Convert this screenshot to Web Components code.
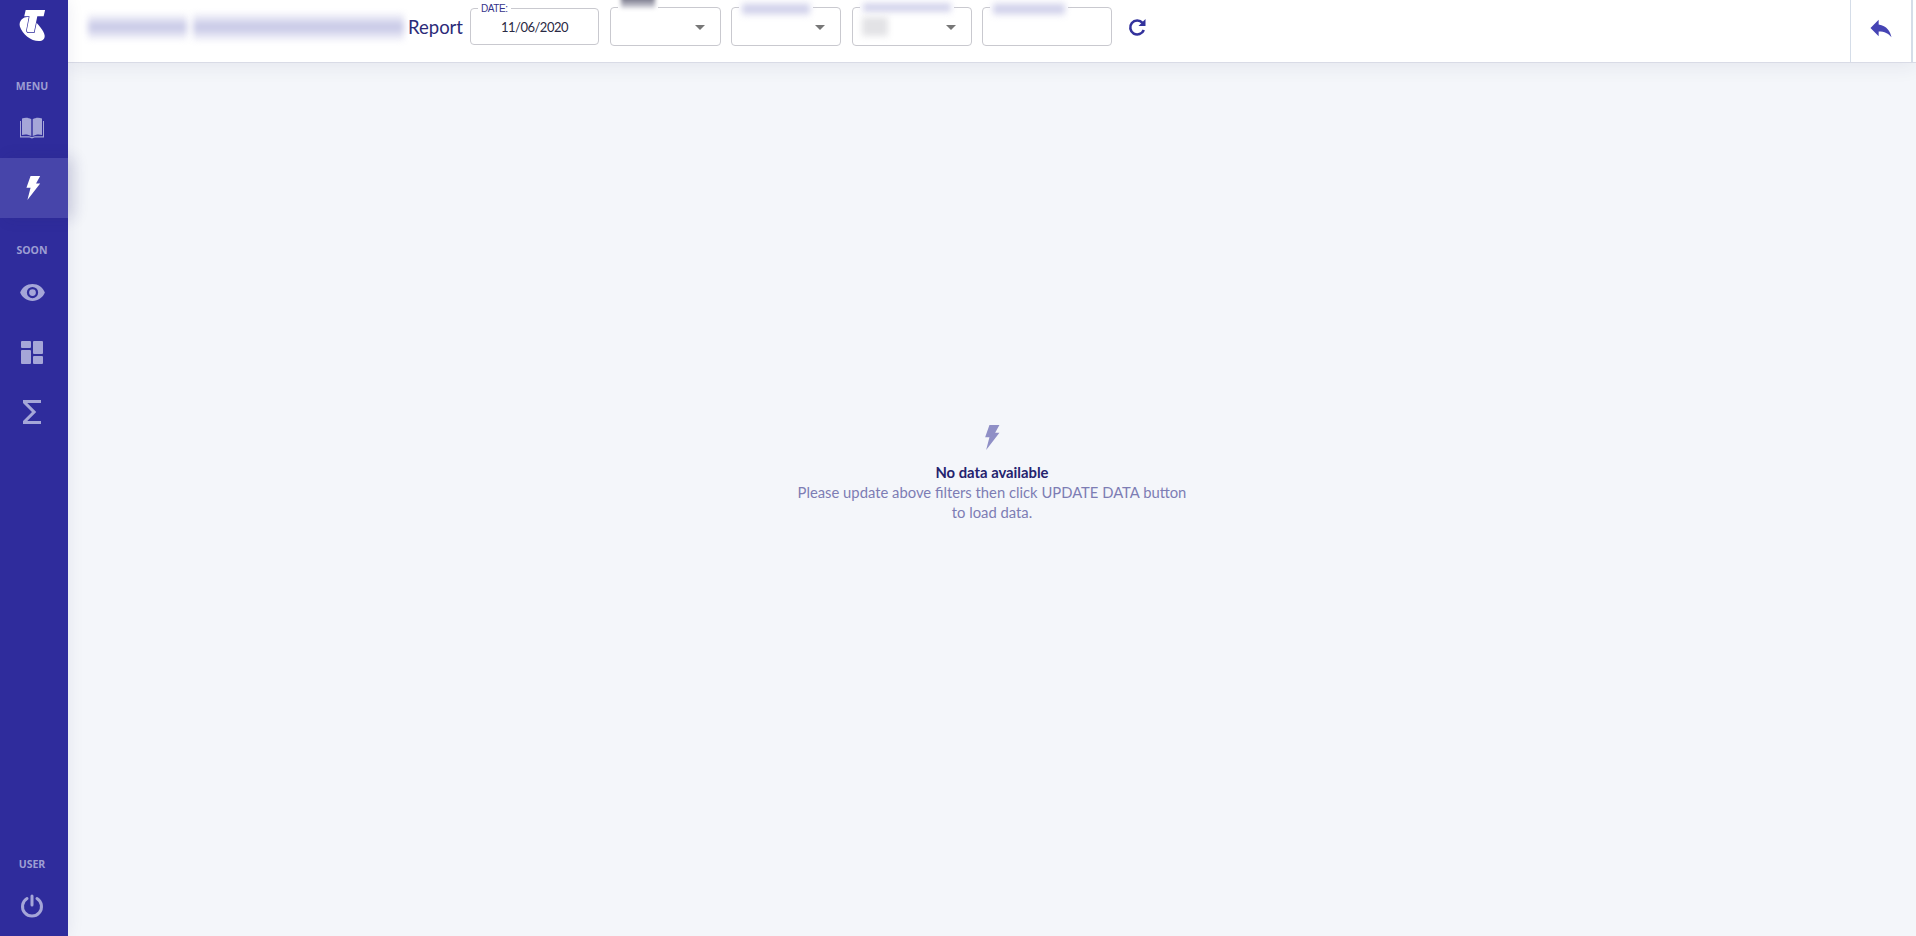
<!DOCTYPE html>
<html>
<head>
<meta charset="utf-8">
<title>Report</title>
<style>
  html, body { margin: 0; height: 100%; }
  body { font-family: Lato, "Noto Sans", sans-serif; background: #f4f6fa; overflow: hidden; }
</style>
</head>
<body>
<app-shell>
  <side-nav slot="nav">
    <nav-logo></nav-logo>
    <nav-heading>MENU</nav-heading>
    <nav-item>
      <svg width="26" height="22" viewBox="0 0 26 22" fill="currentColor"><path d="M3 1.500C6 .2 9.500 .4 12.300 2.200V19C9.500 17.400 6 17 3 18Z"/><path d="M23 1.500C20 .2 16.500 .4 13.700 2.200V19C16.500 17.400 20 17 23 18Z"/><path d="M1 4V20.500H10.500L13 21.500L15.500 20.500H25V4H24V19.200H16L13 20 10 19.200H2V4Z"/></svg>
    </nav-item>
    <nav-item active>
      <svg width="15" height="24" viewBox="0 0 14.700 25" fill="currentColor"><polygon points="4.300,0 14.300,0 10,7.700 14.300,7.700 1,25 4.300,12.300 0,12.300"/></svg>
    </nav-item>
    <nav-heading>SOON</nav-heading>
    <nav-item>
      <svg width="27" height="27" viewBox="0 0 24 24" fill="currentColor"><path d="M12,9A3,3 0 0,0 9,12A3,3 0 0,0 12,15A3,3 0 0,0 15,12A3,3 0 0,0 12,9M12,17A5,5 0 0,1 7,12A5,5 0 0,1 12,7A5,5 0 0,1 17,12A5,5 0 0,1 12,17M12,4.500C7,4.500 2.730,7.610 1,12C2.730,16.390 7,19.500 12,19.500C17,19.500 21.270,16.390 23,12C21.270,7.610 17,4.500 12,4.500Z"/></svg>
    </nav-item>
    <nav-item>
      <svg width="22" height="23" viewBox="0 0 22 23" fill="currentColor"><rect x="0" y="0" width="10" height="7" rx="1"/><rect x="12" y="0" width="10" height="13" rx="1"/><rect x="0" y="9" width="10" height="14" rx="1"/><rect x="12" y="15" width="10" height="8" rx="1"/></svg>
    </nav-item>
    <nav-item>
      <svg width="36" height="36" viewBox="0 0 24 24" fill="currentColor"><path d="M18,6H8.830L14.830,12L8.830,18H18V20H6V18L12,12L6,6V4H18V6Z"/></svg>
    </nav-item>
    <nav-spacer></nav-spacer>
    <nav-heading>USER</nav-heading>
    <nav-item>
      <svg width="24" height="24" viewBox="0 0 24 24" fill="none" stroke="currentColor" stroke-width="3" stroke-linecap="round"><path d="M7 4.500A9.500 9.500 0 1 0 17 4.500"/><path d="M12 2V11"/></svg>
    </nav-item>
  </side-nav>

  <top-bar slot="top">
    <blur-block style="width:99px;height:24px;margin-right:6px"></blur-block>
    <blur-block style="width:211px;height:26px;margin-right:4px"></blur-block>
    <page-title>Report</page-title>
    <filter-field label="DATE:" value="11/06/2020" style="width:129px;height:37px;margin:0 11px 0 7px"></filter-field>
    <filter-field select style="width:111px;margin-right:10px">
      <blur-block slot="legend" dark style="width:34px;height:13px;margin-top:-7px"></blur-block>
    </filter-field>
    <filter-field select style="width:110px;margin-right:11px">
      <blur-block slot="legend" style="width:68px;height:14px"></blur-block>
    </filter-field>
    <filter-field select style="width:120px;margin-right:10px">
      <blur-block slot="legend" style="width:88px;height:11px"></blur-block>
      <blur-block slot="content" gray style="width:26px;height:19px"></blur-block>
    </filter-field>
    <filter-field style="width:130px">
      <blur-block slot="legend" style="width:72px;height:14px"></blur-block>
    </filter-field>
    <refresh-button></refresh-button>
    <back-button slot="end"></back-button>
  </top-bar>

  <empty-state
    title="No data available"
    text="Please update above filters then click UPDATE DATA button to load data."></empty-state>
</app-shell>

<script>
class AppShell extends HTMLElement {
  constructor() {
    super();
    this.attachShadow( {mode: 'open'} ).innerHTML = `
      <style>
        :host { display: grid; grid-template-columns: 68px 1fr; grid-template-rows: 63px 1fr; height: 100vh; }
        ::slotted( [slot=nav] ) { grid-row: 1 / 3; }
        main { display: flex; min-width: 0; }
      </style>
      <slot name="nav"></slot>
      <slot name="top"></slot>
      <main><slot></slot></main>
    `;
  }
}

class SideNav extends HTMLElement {
  constructor() {
    super();
    this.attachShadow( {mode: 'open'} ).innerHTML = `
      <style>
        :host {
          background: #2f2c9c;
          box-shadow: 0 0 16px rgba( 30, 30, 90, 0.08 );
          display: flex;
          flex-direction: column;
          height: 100%;
          position: relative;
          z-index: 2;
        }
      </style>
      <slot></slot>
    `;
  }
}

class NavLogo extends HTMLElement {
  constructor() {
    super();
    this.attachShadow( {mode: 'open'} ).innerHTML = `
      <style>
        :host { display: flex; height: 54px; justify-content: center; padding: 9px 4px 0 0; box-sizing: border-box; }
      </style>
      <svg width="28" height="33" viewBox="0 0 28 34">
        <path fill="#fff" d="M3 11C6 8 9 8 11 8.500L9 24H16L17.500 13C21 17 26 22 27 27C27.500 31 25 33 21 33C13 33 4 26 1.500 18C.8 15 1.500 13 3 11Z"/>
        <path fill="#fff" stroke="#2f2c9c" stroke-width="1.400" paint-order="stroke" d="M7.500 1H27.500L26 7.500H19.500L16 24H10.500C9 24 8.500 23 8.800 21.500L11.500 7.500H6Z"/>
      </svg>
    `;
  }
}

class NavHeading extends HTMLElement {
  constructor() {
    super();
    this.attachShadow( {mode: 'open'} ).innerHTML = `
      <style>
        :host {
          color: #9d9ed3;
          display: block;
          font-family: "Open Sans", sans-serif;
          font-size: 10.500px;
          font-weight: 700;
          line-height: 24px;
          margin-top: 20px;
          padding-right: 4px;
          text-align: center;
        }
      </style>
      <slot></slot>
    `;
  }
}

class NavItem extends HTMLElement {
  constructor() {
    super();
    this.attachShadow( {mode: 'open'} ).innerHTML = `
      <style>
        :host {
          align-items: center;
          box-sizing: border-box;
          color: #a5a6d8;
          display: flex;
          flex: none;
          height: 60px;
          justify-content: center;
          padding-right: 4px;
        }
        :host( [active] ) {
          background: #4745aa;
          box-shadow: 6px 0 14px rgba( 40, 40, 110, 0.16 );
          color: #fff;
          padding-right: 1px;
        }
      </style>
      <slot></slot>
    `;
  }
}

class NavSpacer extends HTMLElement {
  constructor() {
    super();
    this.attachShadow( {mode: 'open'} ).innerHTML = `<style>:host { display: block; flex: 1; }</style>`;
  }
}

class TopBar extends HTMLElement {
  constructor() {
    super();
    this.attachShadow( {mode: 'open'} ).innerHTML = `
      <style>
        :host {
          background: #fff;
          border-bottom: 1px solid #d9dbe6;
          box-shadow: 0 4px 18px rgba( 40, 40, 90, 0.07 );
          box-sizing: border-box;
          display: flex;
          height: 63px;
          padding-left: 20px;
          position: relative;
          z-index: 1;
        }
        .row { align-items: center; display: flex; flex: 1; padding-bottom: 9px; }
      </style>
      <div class="row"><slot></slot></div>
      <slot name="end"></slot>
    `;
  }
}

class BlurBlock extends HTMLElement {
  constructor() {
    super();
    this.attachShadow( {mode: 'open'} ).innerHTML = `
      <style>
        :host {
          background: linear-gradient( #eaeaf6 0 18%, #cbcce8 36% 64%, #eaeaf6 82% );
          display: block;
          filter: blur( 3px );
          flex: none;
        }
        :host( [dark] ) { background: linear-gradient( #55556a, #d8d8e0 ); filter: blur( 2px ); }
        :host( [gray] ) { background: #e3e3e6; }
      </style>
    `;
  }
}

class PageTitle extends HTMLElement {
  constructor() {
    super();
    this.attachShadow( {mode: 'open'} ).innerHTML = `
      <style>
        :host { color: #2b2a78; display: block; flex: none; font-size: 18.500px; }
      </style>
      <slot></slot>
    `;
  }
}

class FilterField extends HTMLElement {
  constructor() {
    super();
    const label = this.getAttribute( 'label' );
    const value = this.getAttribute( 'value' );
    this.attachShadow( {mode: 'open'} ).innerHTML = `
      <style>
        :host {
          border: 1px solid #c9c9cf;
          border-radius: 4px;
          box-sizing: border-box;
          display: block;
          flex: none;
          height: 39px;
          position: relative;
        }
        .legend { background: #fff; left: 7px; line-height: 0; padding: 0 3px; position: absolute; top: -6px; }
        .label { color: #34338a; font-family: "Liberation Sans", sans-serif; font-size: 10px; letter-spacing: -0.4px; line-height: 10px; }
        .legend.text { left: 7px; top: -5px; }
        .content { align-items: center; display: flex; height: 100%; padding-left: 9px; }
        .value { color: #2a2a44; flex: 1; font-size: 13px; letter-spacing: -0.5px; padding-right: 9px; text-align: center; }
        .caret {
          border-left: 5px solid transparent;
          border-right: 5px solid transparent;
          border-top: 5px solid #777;
          position: absolute;
          right: 15px;
          top: 17px;
        }
      </style>
      <div class="legend ${label ? 'text' : ''}">${label ? `<span class="label">${label}</span>` : '<slot name="legend"></slot>'}</div>
      <div class="content">${value ? `<span class="value">${value}</span>` : ''}<slot name="content"></slot></div>
      ${this.hasAttribute( 'select' ) ? '<div class="caret"></div>' : ''}
    `;
  }
}

class RefreshButton extends HTMLElement {
  constructor() {
    super();
    this.attachShadow( {mode: 'open'} ).innerHTML = `
      <style>
        :host { color: #33329c; display: flex; flex: none; margin: 2px 0 0 15px; }
      </style>
      <svg width="20" height="20" viewBox="0 0 20 20" fill="none" stroke="currentColor" stroke-width="2.600">
        <path d="M15.500 4.800A7 7 0 1 0 16.800 12"/>
        <path d="M18.500 1V8H11.500Z" fill="currentColor" stroke="none"/>
      </svg>
    `;
  }
}

class BackButton extends HTMLElement {
  constructor() {
    super();
    this.attachShadow( {mode: 'open'} ).innerHTML = `
      <style>
        :host {
          align-items: center;
          border-left: 1px solid #d5dde8;
          border-right: 2px solid #d5dde8;
          box-sizing: border-box;
          color: #4644b4;
          display: flex;
          flex: none;
          justify-content: center;
          margin-right: 3px;
          padding-bottom: 6px;
          width: 63px;
        }
      </style>
      <svg width="28" height="28" viewBox="0 0 24 24" fill="currentColor"><path d="M10,9V5L3,12L10,19V14.900C15,14.900 18.500,16.500 21,20C20,15 17,10 10,9Z"/></svg>
    `;
  }
}

class EmptyState extends HTMLElement {
  constructor() {
    super();
    this.attachShadow( {mode: 'open'} ).innerHTML = `
      <style>
        :host {
          align-items: center;
          display: flex;
          flex: 1;
          flex-direction: column;
          padding-top: 362px;
          text-align: center;
        }
        svg { color: #8f8fc6; display: block; margin-bottom: 12px; }
        h2 { color: #24236e; font-size: 14.800px; font-weight: 700; line-height: 20px; margin: 0; }
        p { color: #7d7db4; font-size: 14.800px; line-height: 20px; margin: 0; width: 400px; }
      </style>
      <svg width="15" height="25" viewBox="0 0 14.700 25" fill="currentColor"><polygon points="4.300,0 14.300,0 10,7.700 14.300,7.700 1,25 4.300,12.300 0,12.300"/></svg>
      <h2>${this.getAttribute( 'title' )}</h2>
      <p>${this.getAttribute( 'text' )}</p>
    `;
  }
}

customElements.define( 'app-shell', AppShell );
customElements.define( 'side-nav', SideNav );
customElements.define( 'nav-logo', NavLogo );
customElements.define( 'nav-heading', NavHeading );
customElements.define( 'nav-item', NavItem );
customElements.define( 'nav-spacer', NavSpacer );
customElements.define( 'top-bar', TopBar );
customElements.define( 'blur-block', BlurBlock );
customElements.define( 'page-title', PageTitle );
customElements.define( 'filter-field', FilterField );
customElements.define( 'refresh-button', RefreshButton );
customElements.define( 'back-button', BackButton );
customElements.define( 'empty-state', EmptyState );
</script>
</body>
</html>
